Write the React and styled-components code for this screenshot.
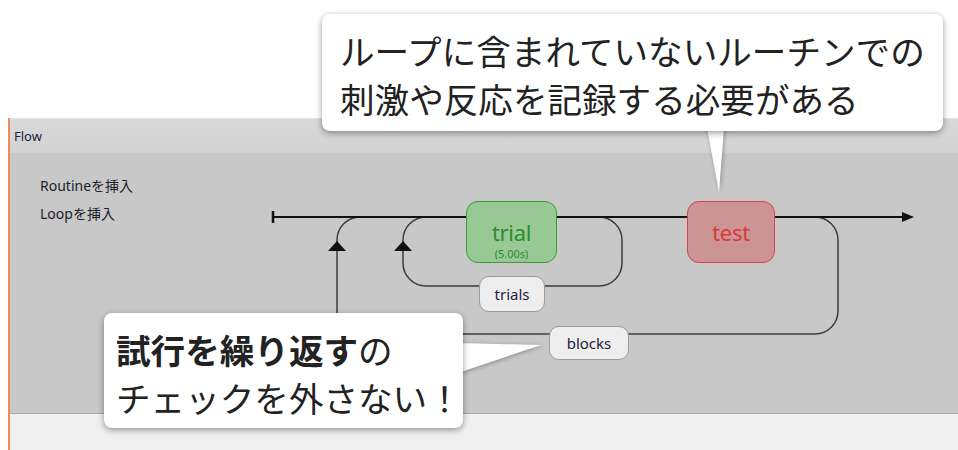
import React from "react";
import styled, { createGlobalStyle } from "styled-components";

const GlobalStyle = createGlobalStyle`
  html, body {
    margin: 0;
    padding: 0;
    background: #ffffff;
  }
  body {
    font-family: "Noto Sans", "Noto Sans CJK JP", sans-serif;
    color: #1e1e1e;
  }
`;

// canvas origin in page coordinates
const OX = 10;
const OY = 153;

const Page = styled.div`
  position: relative;
  width: 958px;
  height: 450px;
  overflow: hidden;
  background: #ffffff;
`;

const TopSpace = styled.div`
  height: 118px;
`;

const Panel = styled.div`
  margin-left: 8px;
  border-left: 2px solid #ee8a62;
  display: flex;
  flex-direction: column;
`;

const Header = styled.div`
  height: 34px;
  border-top: 1px solid #e2e2e2;
  background: linear-gradient(#d9d9d9, #d2d2d2);
  display: flex;
  align-items: center;
  padding-left: 4px;
  font-size: 13px;
  color: #1c1c3a;
`;

const Canvas = styled.div`
  position: relative;
  height: 260px;
  background: #c8c8c8;
`;

const Menu = styled.div`
  display: flex;
  flex-direction: column;
  padding: 19px 0 0 30px;
  font-size: 14px;
  line-height: 28px;
  color: #1c1c2c;
`;

const Footer = styled.div`
  height: 36px;
  border-top: 1px solid #a9a9a9;
  background: #f0f0f0;
`;

const Wires = styled.svg`
  position: absolute;
  left: 0;
  top: 0;
`;

const Routine = styled.div`
  position: absolute;
  box-sizing: border-box;
  width: ${(p) => p.w}px;
  height: 62px;
  padding-top: ${(p) => (p.sub ? 18 : 0)}px;
  border-radius: 12px;
  border: 1.5px solid ${(p) => p.edge};
  background: ${(p) => p.fill};
  color: ${(p) => p.ink};
  display: flex;
  flex-direction: column;
  align-items: center;
  justify-content: ${(p) => (p.sub ? "flex-start" : "center")};
  font-family: "Noto Sans", sans-serif;
`;

const RoutineName = styled.div`
  font-size: 22px;
  line-height: 24px;
  letter-spacing: -0.3px;
`;

const RoutineTime = styled.div`
  margin-top: 3px;
  font-size: 11px;
  line-height: 13px;
`;

const LoopLabel = styled.div`
  position: absolute;
  box-sizing: border-box;
  width: ${(p) => p.w}px;
  height: ${(p) => p.h}px;
  border-radius: 10px;
  border: 1px solid #9c9c9c;
  background: #eeeeee;
  display: flex;
  align-items: center;
  justify-content: center;
  font-size: 15px;
  color: #1c1c40;
`;

const Callout = styled.div`
  position: absolute;
  box-sizing: border-box;
  width: ${(p) => p.w}px;
  height: ${(p) => p.h}px;
  padding: 12px 0 0 ${(p) => p.pad}px;
  background: #ffffff;
  border-radius: 8px;
  box-shadow: 0 2px 6px rgba(0, 0, 0, 0.4);
  font-family: "Noto Sans CJK JP", sans-serif;
  font-size: 34.6px;
  line-height: 48px;
  color: #222222;
  white-space: nowrap;
`;

const Strong = styled.b`
  font-weight: 700;
`;

const Tail = styled.svg`
  position: absolute;
  left: 0;
  top: 0;
  overflow: visible;
  filter: drop-shadow(1px 1px 2px rgba(0, 0, 0, 0.3));
`;

const at = (x, y) => ({ left: x - OX, top: y - OY });

const Diagram = () => (
  <Wires width={948} height={260} viewBox={`${OX} ${OY} 948 260`}>
    <g fill="none" stroke="#3d3d3d" strokeWidth="1.5">
      <rect x="403" y="217" width="219" height="69" rx="23" />
      <rect x="337" y="217" width="501" height="117" rx="23" />
    </g>
    <line x1="273" y1="217" x2="905" y2="217" stroke="#111" strokeWidth="2" />
    <line x1="273" y1="211" x2="273" y2="223" stroke="#111" strokeWidth="2.5" />
    <polygon points="914,217 902,212 902,222" fill="#111" />
    <polygon points="337,241 328,251 346,251" fill="#111" />
    <polygon points="403,241 394,251 412,251" fill="#111" />
  </Wires>
);

export default function App() {
  return (
    <Page>
      <GlobalStyle />
      <TopSpace />
      <Panel>
        <Header>Flow</Header>
        <Canvas>
          <Menu>
            <span>Routineを挿入</span>
            <span>Loopを挿入</span>
          </Menu>
          <Diagram />
          <Routine style={at(466, 201)} w={91} sub fill="#98c994" edge="#3a9a34" ink="#2c8c2c">
            <RoutineName>trial</RoutineName>
            <RoutineTime>(5.00s)</RoutineTime>
          </Routine>
          <Routine style={at(687, 201)} w={88} fill="#cc9494" edge="#de4242" ink="#d83a3a">
            <RoutineName>test</RoutineName>
          </Routine>
          <LoopLabel style={at(479, 276)} w={66} h={36}>trials</LoopLabel>
          <LoopLabel style={at(549, 326)} w={80} h={34}>blocks</LoopLabel>
        </Canvas>
        <Footer />
      </Panel>

      <Tail width={958} height={450}>
        <polygon points="707,128 724,128 719,192" fill="#fff" />
        <polygon points="458,343 541,345 458,373" fill="#fff" />
      </Tail>
      <Callout style={{ left: 322, top: 14 }} w={621} h={117} pad={18}>
        ループに含まれていないルーチンでの
        <br />
        刺激や反応を記録する必要がある
      </Callout>
      <Callout style={{ left: 104, top: 313 }} w={359} h={115} pad={12}>
        <Strong>試行を繰り返す</Strong>の
        <br />
        チェックを外さない！
      </Callout>
    </Page>
  );
}
